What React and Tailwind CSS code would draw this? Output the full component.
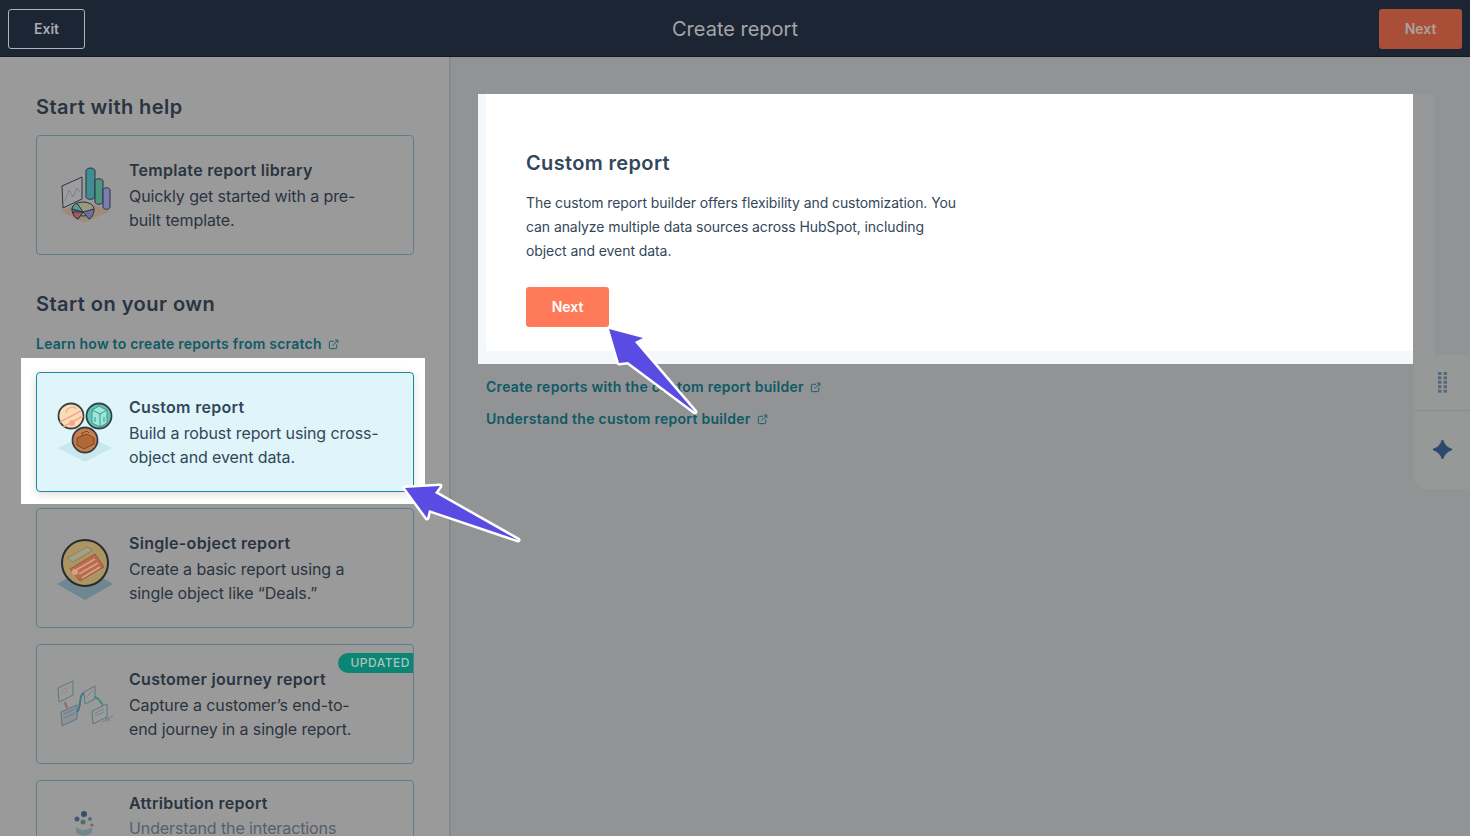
const TemplateArt = () => (
  <svg width="56" height="60" viewBox="0 0 56 60" fill="none" stroke="#2b3442" strokeWidth="1">
    <path d="M3 46 28 36 53 46 27 58Z" fill="#a08a78" stroke="none" />
    <path d="M5 21 25 12V34L6 43Z" fill="#9d9d9d" />
    <path d="M8 36 12 25 16 32 20 23 23 27" stroke="#6e7a88" strokeWidth="0.8" />
    <path d="M29 6C29 2 38 2 38 6V32C38 35 29 35 29 32Z" fill="#3f8c92" />
    <path d="M38 16C38 13 46 13 46 16V37C46 40 38 40 38 37Z" fill="#4f9480" />
    <path d="M46 25C46 22 53 22 53 25V42C53 45 46 45 46 42Z" fill="#7a7fb0" />
    <ellipse cx="26" cy="44" rx="11" ry="7" fill="#9c9a7c" />
    <path d="M15 44C15 48 17 52 21 54L26 47 32 54C36 52 37 48 37 44L26 47Z" fill="#6d6e9c" />
    <path d="M15 44 26 47 20 38C17 39 15 42 15 44Z" fill="#5e9a88" />
    <path d="M16 47 26 47 21 54C18 53 16 50 16 47Z" fill="#a55a66" />
  </svg>
)

const CustomArt = () => (
  <svg width="56" height="60" viewBox="0 0 56 60" fill="none" stroke="#3a3f46" strokeWidth="1.8">
    <path d="M28 33 55 46 28 60 1 46Z" fill="#c9e8ee" stroke="none" />
    <circle cx="14" cy="14" r="12.5" fill="#fbdcb4" />
    <path d="M3 20 24 9M6 25 26 14" stroke="#f3a98f" strokeWidth="1.5" />
    <path d="M9 11C9 6 17 3 19 7" stroke="#e9b48f" strokeWidth="1.5" />
    <circle cx="15" cy="21" r="3" fill="#f3a98f" stroke="none" />
    <circle cx="42" cy="14" r="12.5" fill="#5fc7b5" />
    <path d="M35 8 42 4 50 8V21L43 25 35 21Z" fill="#a5e5d8" stroke="#2f9c8c" strokeWidth="1" />
    <path d="M35 8 43 12 50 8M43 12V25M38 15V20M47 15V20" stroke="#2f9c8c" strokeWidth="1" />
    <circle cx="28" cy="38" r="12.5" fill="#c77f4a" />
    <path d="M20 36 30 32 37 36V42L27 47 20 43Z" fill="#b0683a" stroke="#7d4520" strokeWidth="1" />
    <path d="M25 34V31L30 29 32 31" stroke="#7d4520" strokeWidth="1" />
  </svg>
)

const SingleArt = () => (
  <svg width="56" height="64" viewBox="0 0 56 64" fill="none">
    <path d="M28 32 56 48 28 64 0 48Z" fill="#6f8791" />
    <circle cx="28" cy="27" r="23" fill="#ac9562" stroke="#262b30" strokeWidth="2" />
    <path d="M10 22 30 11 36 14 16 26Z" fill="#a3a083" stroke="#8b8266" />
    <path d="M13 33 38 18 47 31 23 45Z" fill="#b86c4c" stroke="#a05a40" />
    <path d="M19 34 38 23M22 38 41 27M25 42 43 31" stroke="#d9a08c" strokeWidth="1.5" />
    <circle cx="18" cy="36" r="3" fill="#d9a08c" />
  </svg>
)

const JourneyArt = () => (
  <svg width="58" height="50" viewBox="0 0 58 50" fill="#9a9c9c" stroke="#5b7684" strokeWidth="1">
    <path d="M2 9 17 2V16L3 23Z" />
    <path d="M6 11 10 9 11 13 7 15ZM12 9 15 7" stroke="#a88583" />
    <path d="M9 23 11 29" stroke="#8a6a66" strokeWidth="2" />
    <path d="M5 33 21 26V40L6 47Z" fill="#8d9198" />
    <path d="M8 35 19 30M8 39 19 34" strokeWidth="0.7" />
    <path d="M21 33C26 28 22 14 29 14" stroke="#3f7a86" strokeWidth="2" fill="none" />
    <path d="M28 13 39 7V20L29 25Z" />
    <path d="M30 19 37 11" strokeWidth="0.7" stroke="#7a7a7a" />
    <path d="M38 18C44 19 43 22 47 26" stroke="#3e8a84" strokeWidth="2" fill="none" />
    <path d="M36 32 51 25V38L37 45Z" />
    <path d="M39 34 48 30M39 37 48 33" strokeWidth="0.7" />
    <path d="M46 43 57 37M49 38 52 43M52 38 54 42" strokeWidth="0.7" fill="none" />
  </svg>
)

const AttributionArt = () => (
  <svg width="20" height="26" viewBox="0 0 20 26" className="block">
    <circle cx="10" cy="3" r="3" fill="#3c4a66" />
    <circle cx="3" cy="8" r="2.5" fill="#46557a" />
    <circle cx="16" cy="8" r="2" fill="#596b80" />
    <circle cx="9" cy="11" r="2.5" fill="#52705e" />
    <circle cx="18" cy="14" r="1.5" fill="#84604e" />
    <path d="M2 16C6 20 14 20 18 16V21C14 26 6 26 2 21Z" fill="#72888c" />
  </svg>
)

const ExternalIcon = ({ className = "" }) => (
  <svg width="11" height="11" viewBox="0 0 12 12" fill="none" stroke="currentColor" strokeWidth="1" className={className}>
    <path d="M6.5 2.5H2.5a1 1 0 0 0-1 1v6a1 1 0 0 0 1 1h6a1 1 0 0 0 1-1V6" />
    <path d="M5 7.2 10.5 1.5M7.5 1.2h3.3v3.3" />
  </svg>
)

const ReportCard = ({ art, title, lines, badge, highlighted }) => (
  <div className={`relative h-[120px] shrink-0 rounded-[4px] border flex items-center ${highlighted ? "bg-[#e0f5f9] border-[#1c8a98] shadow-[0_2px_8px_rgba(0,0,0,0.14)]" : "border-[#5f7d8a]"}`}>
    <div className="w-[92px] shrink-0 flex justify-center pl-[4px]">{art}</div>
    <div className={highlighted ? "text-[#33475b]" : "text-[#2a3441]"}>
      <div className="text-base leading-6 font-semibold tracking-[0.3px] mb-[2px]">{title}</div>
      {lines.map((line) => (
        <div key={line} className="text-base leading-6 tracking-[-0.1px]">{line}</div>
      ))}
    </div>
    {badge && (
      <span className="absolute right-0 top-[8px] h-5 pl-3 pr-[3px] rounded-l-full bg-[#0b8574] text-[#a9c4bf] text-xs leading-5 font-medium tracking-[0.5px]">
        {badge}
      </span>
    )}
  </div>
)

const Sidebar = () => (
  <aside className="w-[451px] shrink-0 h-full overflow-hidden bg-[#9a9a9a] border-r-2 border-[#878889] pl-9 pr-[35px] pt-[36px]">
    <h2 className="text-xl leading-7 font-semibold tracking-[0.42px] text-[#2a3441]">Start with help</h2>
    <div className="mt-[14px]">
      <ReportCard
        art={<TemplateArt />}
        title="Template report library"
        lines={["Quickly get started with a pre-", "built template."]}
      />
    </div>
    <h2 className="mt-[35px] text-xl leading-7 font-semibold tracking-[0.47px] text-[#2a3441]">Start on your own</h2>
    <a className="mt-[14px] flex items-center gap-[6px] text-sm leading-6 font-semibold tracking-[0.23px] text-[#0e5a66]">
      Learn how to create reports from scratch
      <ExternalIcon />
    </a>
    <div className="relative mt-[16px]">
      <div className="absolute -left-[15px] -right-[11px] -top-[14px] -bottom-[12px] bg-white" />
      <div className="relative">
        <ReportCard
          highlighted
          art={<CustomArt />}
          title="Custom report"
          lines={["Build a robust report using cross-", "object and event data."]}
        />
      </div>
    </div>
    <div className="mt-[16px] flex flex-col gap-4">
      <ReportCard
        art={<SingleArt />}
        title="Single-object report"
        lines={["Create a basic report using a", "single object like “Deals.”"]}
      />
      <ReportCard
        art={<JourneyArt />}
        badge="UPDATED"
        title="Customer journey report"
        lines={["Capture a customer’s end-to-", "end journey in a single report."]}
      />
      <div className="h-[120px] shrink-0 rounded-[4px] border border-[#5f7d8a] flex items-start pt-[10px]">
        <div className="w-[92px] shrink-0 flex justify-center pt-[20px] pl-[2px]"><AttributionArt /></div>
        <div className="text-[#2a3441]">
          <div className="text-base leading-6 font-semibold tracking-[0.3px] mb-[1px]">Attribution report</div>
          <div className="text-base leading-6 tracking-[-0.1px] text-[#55606a]">Understand the interactions</div>
        </div>
      </div>
    </div>
  </aside>
)

const SideTabs = () => (
  <div className="absolute right-0 top-[298px] w-[56px] h-[134px] rounded-l-xl bg-[#979898] flex flex-col">
    <div className="h-[56px] border-b border-[#8a8b8c] flex items-center justify-center">
      <svg width="9" height="21" viewBox="0 0 9 21" fill="#55677c">
        {[0, 4.4, 8.8, 13.2, 17.6].map((y) => (
          <g key={y}>
            <rect x="0" y={y} width="3.4" height="3" />
            <rect x="5.6" y={y} width="3.4" height="3" />
          </g>
        ))}
      </svg>
    </div>
    <div className="flex-1 flex items-center justify-center pb-[2px]">
      <svg width="19" height="19" viewBox="0 0 20 20" fill="#2c4a6c">
        <path d="M10 0C11.5 5.5 14.5 8.5 20 10 14.5 11.5 11.5 14.5 10 20 8.5 14.5 5.5 11.5 0 10 5.5 8.5 8.5 5.5 10 0Z" stroke="#2c4a6c" strokeWidth="1.5" strokeLinejoin="round" />
      </svg>
    </div>
  </div>
)

const Arrows = () => (
  <svg className="absolute left-0 top-0 pointer-events-none" width="1470" height="836" viewBox="0 0 1470 836" fill="#5a4be3" stroke="#ffffff" strokeWidth="5" strokeLinejoin="round" paintOrder="stroke">
    <path d="M405 488 440 486 435 493 518 540 429 510 427 518Z" />
    <path d="M609 329 643 338 635 342 695 412 628 362 619 363Z" />
  </svg>
)

const Main = () => (
  <main className="relative flex-1 h-full bg-[#929394] pl-[27px] pt-[37px]">
    <div className="w-[956px] h-[270px] bg-[#979899] -mb-[270px]" />
    <div className="relative w-[935px] h-[270px] bg-[#f5f8fa] pl-[8px] pb-[13px]">
      <div className="h-full bg-white pl-[40px] pt-[55px]">
        <h1 className="text-xl leading-7 font-semibold tracking-[0.35px] text-[#33475b]">Custom report</h1>
        <p className="mt-[14px] w-[440px] text-sm leading-6 tracking-[-0.08px] text-[#33475b]">
          The custom report builder offers flexibility and customization. You can analyze multiple data sources across HubSpot, including object and event data.
        </p>
        <button className="mt-[24px] w-[83px] h-[40px] rounded-[3px] bg-[#ff7a59] text-white text-sm font-semibold">Next</button>
      </div>
    </div>
    <div className="mt-[11px] pl-[8px] flex flex-col gap-2 text-sm leading-6 font-semibold tracking-[0.28px] text-[#0e5a66]">
      <a className="flex items-center gap-[6px]">Create reports with the custom report builder <ExternalIcon /></a>
      <a className="flex items-center gap-[6px]">Understand the custom report builder <ExternalIcon /></a>
    </div>
    <SideTabs />
  </main>
)

export default function App() {
  return (
    <div className="relative w-full h-[836px] overflow-hidden font-['Inter','Liberation_Sans',sans-serif] flex flex-col">
      <header className="h-[57px] shrink-0 bg-[#1c2533] border-b border-[#15181d] flex items-center justify-between px-2 pt-[2px] relative">
        <button className="w-[77px] h-[40px] rounded-[3px] border border-[#b0b3b6] text-[#a9abad] text-sm font-semibold">Exit</button>
        <div className="absolute left-0 right-0 text-center text-xl text-[#a4a6a9] pointer-events-none">Create report</div>
        <button className="w-[83px] h-[40px] rounded-[3px] bg-[#a94f37] text-[#a8a29e] text-sm font-semibold">Next</button>
      </header>
      <div className="flex-1 min-h-0 flex">
        <Sidebar />
        <Main />
      </div>
      <Arrows />
    </div>
  )
}
